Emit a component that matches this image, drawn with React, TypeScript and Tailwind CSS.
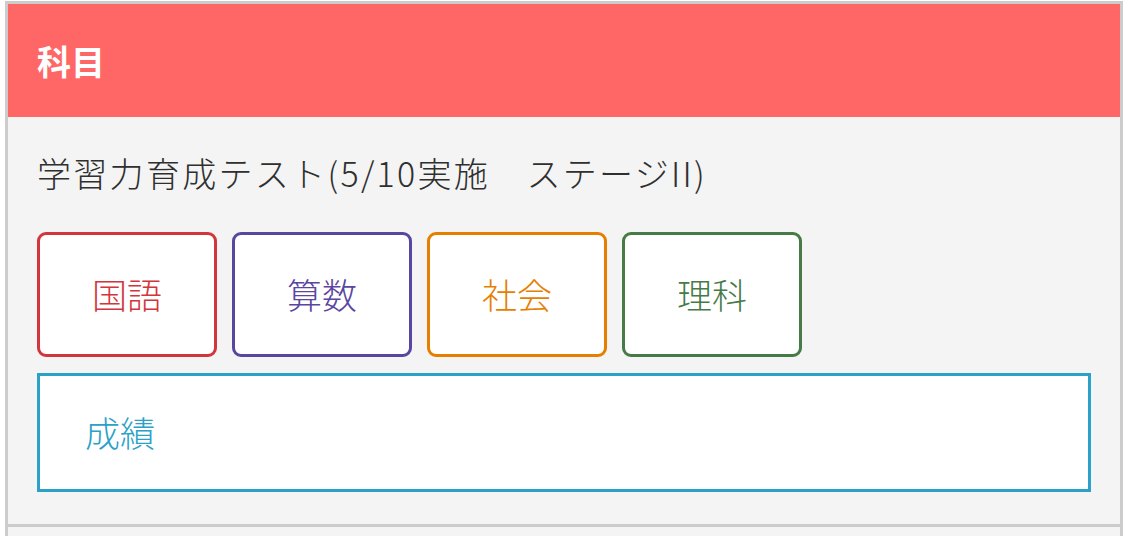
import React from 'react';

const subjects = [
  { label: '国語', color: 'border-[#d2363c] text-[#d2363c]' },
  { label: '算数', color: 'border-[#5946a0] text-[#5946a0]' },
  { label: '社会', color: 'border-[#e67e00] text-[#e67e00]' },
  { label: '理科', color: 'border-[#467a46] text-[#467a46]' },
];

const font = { fontFamily: '"Noto Sans CJK JP", "Noto Sans", sans-serif' };

export default function App() {
  return (
    <div className="w-[1130px] h-[536px] overflow-hidden bg-white pt-px pl-[5px]" style={font}>
      <div className="w-[1118px] border-[3px] border-[#cccccc] bg-[#f4f4f4]">
        {/* Header */}
        <div className="h-[113px] bg-[#ff6666] flex items-center px-[29px]">
          <h2 className="text-[34px] font-bold text-white leading-none">科目</h2>
        </div>

        {/* Body */}
        <div className="px-[29px] pt-[28px] pb-[32px]">
          <p className="text-[34px] leading-[56px] font-light text-[#2f2f2f] tracking-[2.3px]">
            学習力育成テスト(5/10実施　ステージII)
          </p>
          <div className="flex gap-[15px] mt-[31px]">
            {subjects.map((s) => (
              <div
                key={s.label}
                className={`w-[180px] h-[125px] rounded-[9px] border-[3px] bg-white flex items-center justify-center text-[35px] font-light ${s.color}`}
              >
                {s.label}
              </div>
            ))}
          </div>
          <div className="mt-[16px] h-[119px] border-[3px] border-[#2ba1c8] bg-white flex items-center px-[45px]">
            <span className="text-[35px] font-light text-[#2ba1c8]">成績</span>
          </div>
        </div>
      </div>
      <div className="w-[1118px] h-[20px] border-x-[3px] border-[#cccccc] bg-[#f4f4f4]" />
    </div>
  );
}
